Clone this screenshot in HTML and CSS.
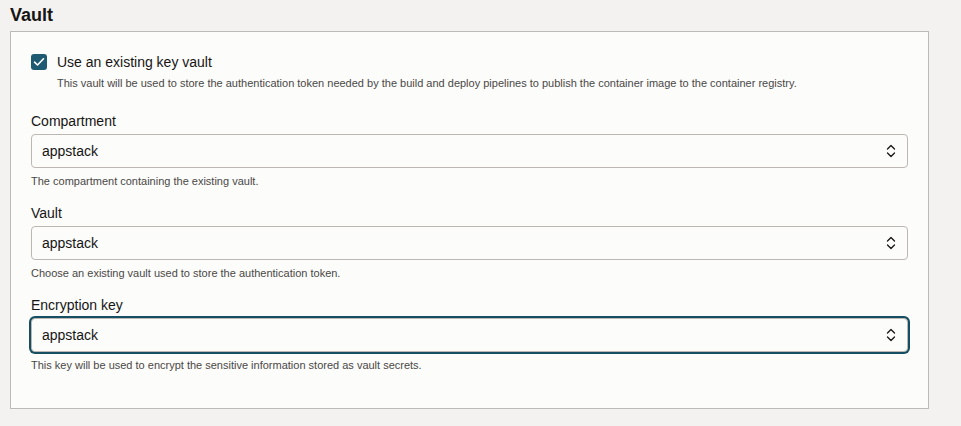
FILE: index.html
```html
<!DOCTYPE html>
<html>
<head>
<meta charset="utf-8">
<link rel="stylesheet" href="styles.css">
</head>
<body>
<h2 class="title">Vault</h2>
<div class="panel">
  <div class="check-row">
    <span class="checkbox">
      <svg width="12" height="10" viewBox="0 0 12 10"><path d="M1.5 5.2 L4.5 8 L10.5 1.8" fill="none" stroke="#fff" stroke-width="1.6" stroke-linecap="round" stroke-linejoin="round"/></svg>
    </span>
    <div class="check-text">
      <div class="check-label">Use an existing key vault</div>
      <div class="help">This vault will be used to store the authentication token needed by the build and deploy pipelines to publish the container image to the container registry.</div>
    </div>
  </div>

  <div class="field">
    <div class="label">Compartment</div>
    <div class="select"><span>appstack</span>
      <svg class="chev" width="10" height="14" viewBox="0 0 10 14"><path d="M1.5 5 L5 1.5 L8.5 5 M1.5 9 L5 12.5 L8.5 9" fill="none" stroke="#161513" stroke-width="1.3" stroke-linecap="round" stroke-linejoin="round"/></svg>
    </div>
    <div class="help">The compartment containing the existing vault.</div>
  </div>

  <div class="field">
    <div class="label">Vault</div>
    <div class="select"><span>appstack</span>
      <svg class="chev" width="10" height="14" viewBox="0 0 10 14"><path d="M1.5 5 L5 1.5 L8.5 5 M1.5 9 L5 12.5 L8.5 9" fill="none" stroke="#161513" stroke-width="1.3" stroke-linecap="round" stroke-linejoin="round"/></svg>
    </div>
    <div class="help">Choose an existing vault used to store the authentication token.</div>
  </div>

  <div class="field">
    <div class="label">Encryption key</div>
    <div class="select focused"><span>appstack</span>
      <svg class="chev" width="10" height="14" viewBox="0 0 10 14"><path d="M1.5 5 L5 1.5 L8.5 5 M1.5 9 L5 12.5 L8.5 9" fill="none" stroke="#161513" stroke-width="1.3" stroke-linecap="round" stroke-linejoin="round"/></svg>
    </div>
    <div class="help">This key will be used to encrypt the sensitive information stored as vault secrets.</div>
  </div>
</div>
</body>
</html>
```
FILE: styles.css
```css
html, body {
  margin: 0;
  padding: 0;
  background: #f3f2f1;
  font-family: "Liberation Sans", Arial, sans-serif;
  color: #161513;
}
body {
  padding: 4px 32px 0 10px;
}
.title {
  margin: 0;
  font-size: 18px;
  font-weight: bold;
  line-height: 22px;
  height: 27px;
}
.panel {
  background: #fcfcfb;
  border: 1px solid #bcbab8;
  padding: 21px 20px 0 20px;
  height: 355px;
}
.check-row {
  display: flex;
  gap: 10px;
}
.checkbox {
  width: 16px;
  height: 16px;
  border-radius: 3px;
  background: #1f5a73;
  display: flex;
  align-items: center;
  justify-content: center;
  flex-shrink: 0;
  margin-top: 1px;
}
.check-label {
  font-size: 14px;
  line-height: 18px;
  margin-bottom: 5px;
}
.help {
  font-size: 11px;
  line-height: 14px;
  color: #4a4846;
}
.field {
  margin-top: 16px;
}
.check-row + .field {
  margin-top: 22px;
}
.label {
  font-size: 14px;
  line-height: 18px;
  margin-bottom: 4px;
}
.select {
  height: 32px;
  border: 1px solid #bdb7b3;
  border-radius: 4px;
  background: #fcfcfb;
  display: flex;
  align-items: center;
  justify-content: space-between;
  padding: 0 11px 0 10px;
  font-size: 14px;
  margin-bottom: 6px;
}
.select.focused {
  box-shadow: 0 0 0 2px #164f63;
}
.chev {
  display: block;
}
```
